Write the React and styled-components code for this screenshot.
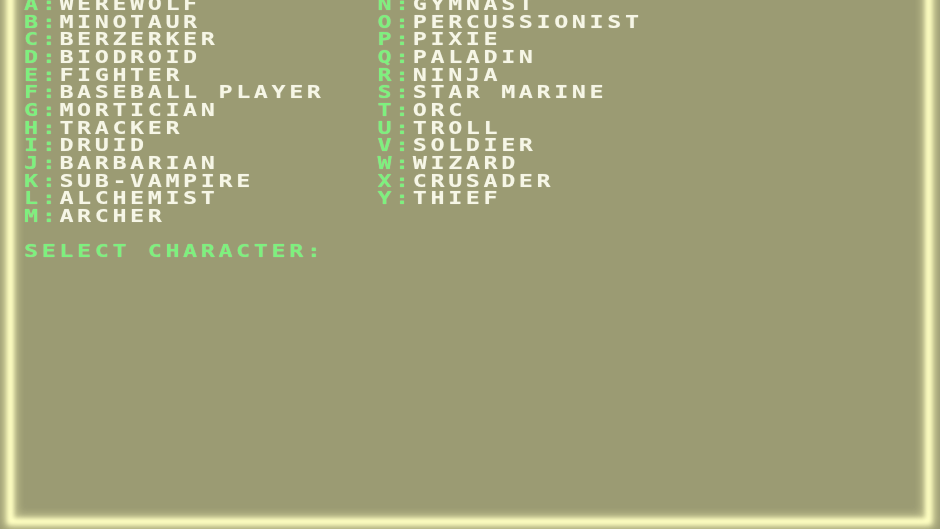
import React from "react";
import styled, { createGlobalStyle } from "styled-components";

const leftRoster = [
  ["A", "WEREWOLF"],
  ["B", "MINOTAUR"],
  ["C", "BERZERKER"],
  ["D", "BIODROID"],
  ["E", "FIGHTER"],
  ["F", "BASEBALL PLAYER"],
  ["G", "MORTICIAN"],
  ["H", "TRACKER"],
  ["I", "DRUID"],
  ["J", "BARBARIAN"],
  ["K", "SUB-VAMPIRE"],
  ["L", "ALCHEMIST"],
  ["M", "ARCHER"],
];

const rightRoster = [
  ["N", "GYMNAST"],
  ["O", "PERCUSSIONIST"],
  ["P", "PIXIE"],
  ["Q", "PALADIN"],
  ["R", "NINJA"],
  ["S", "STAR MARINE"],
  ["T", "ORC"],
  ["U", "TROLL"],
  ["V", "SOLDIER"],
  ["W", "WIZARD"],
  ["X", "CRUSADER"],
  ["Y", "THIEF"],
];

// the old terminal font is wider than anything installed, so the whole
// text block gets stretched sideways; widths below are pre-stretch units
const STRETCH = 1.3;

function App() {
  return (
    <>
      <GlobalStyle />
      <Screen>
        <Terminal>
          <Columns>
            <Column>
              {leftRoster.map(([key, name]) => (
                <Entry key={key}>
                  <Key>{key}:</Key>
                  <Name>{name}</Name>
                </Entry>
              ))}
            </Column>
            <Column>
              {rightRoster.map(([key, name]) => (
                <Entry key={key}>
                  <Key>{key}:</Key>
                  <Name>{name}</Name>
                </Entry>
              ))}
            </Column>
          </Columns>
          <Prompt>SELECT CHARACTER:</Prompt>
        </Terminal>
        <GlowRing />
      </Screen>
    </>
  );
}

export default App;

const GlobalStyle = createGlobalStyle`
  html, body {
    margin: 0;
    padding: 0;
    background: #9b9b73;
  }
  #root {
    width: 940px;
    height: 529px;
  }
`;

const Screen = styled.div`
  position: relative;
  width: 940px;
  height: 529px;
  overflow: hidden;
  background: #9b9b73;
`;

const GlowRing = styled.div`
  position: absolute;
  left: 7px;
  right: 8px;
  top: -40px;
  bottom: 4px;
  border: 7px solid #ffffc2;
  border-radius: 3px;
  box-shadow: 0 0 7px 3px rgba(246, 246, 180, 0.75),
    inset 0 0 7px 3px rgba(232, 232, 170, 0.6);
  filter: blur(2px);
  pointer-events: none;
`;

const Terminal = styled.div`
  display: flex;
  flex-direction: column;
  width: 600px;
  margin: -5px 0 0 24px;
  transform: scaleX(${STRETCH});
  transform-origin: 0 0;
  font-family: "DejaVu Sans Mono", "Liberation Mono", monospace;
  font-weight: bold;
  font-size: 18px;
  line-height: 17.67px;
  letter-spacing: ${(17.67 / STRETCH - 18 * 0.602).toFixed(2)}px;
  text-shadow: 0 0 1px rgba(255, 255, 255, 0.35);
`;

const Columns = styled.div`
  display: grid;
  grid-template-columns: ${(353.4 / STRETCH).toFixed(2)}px auto;
  align-items: start;
`;

const Column = styled.div`
  display: flex;
  flex-direction: column;
`;

const Entry = styled.div`
  display: flex;
  white-space: pre;
  height: 17.67px;
`;

const Key = styled.span`
  color: #7ef07e;
`;

const Name = styled.span`
  color: #f6f6e6;
`;

const Prompt = styled.div`
  margin-top: 17.67px;
  color: #7ef07e;
  white-space: pre;
`;
